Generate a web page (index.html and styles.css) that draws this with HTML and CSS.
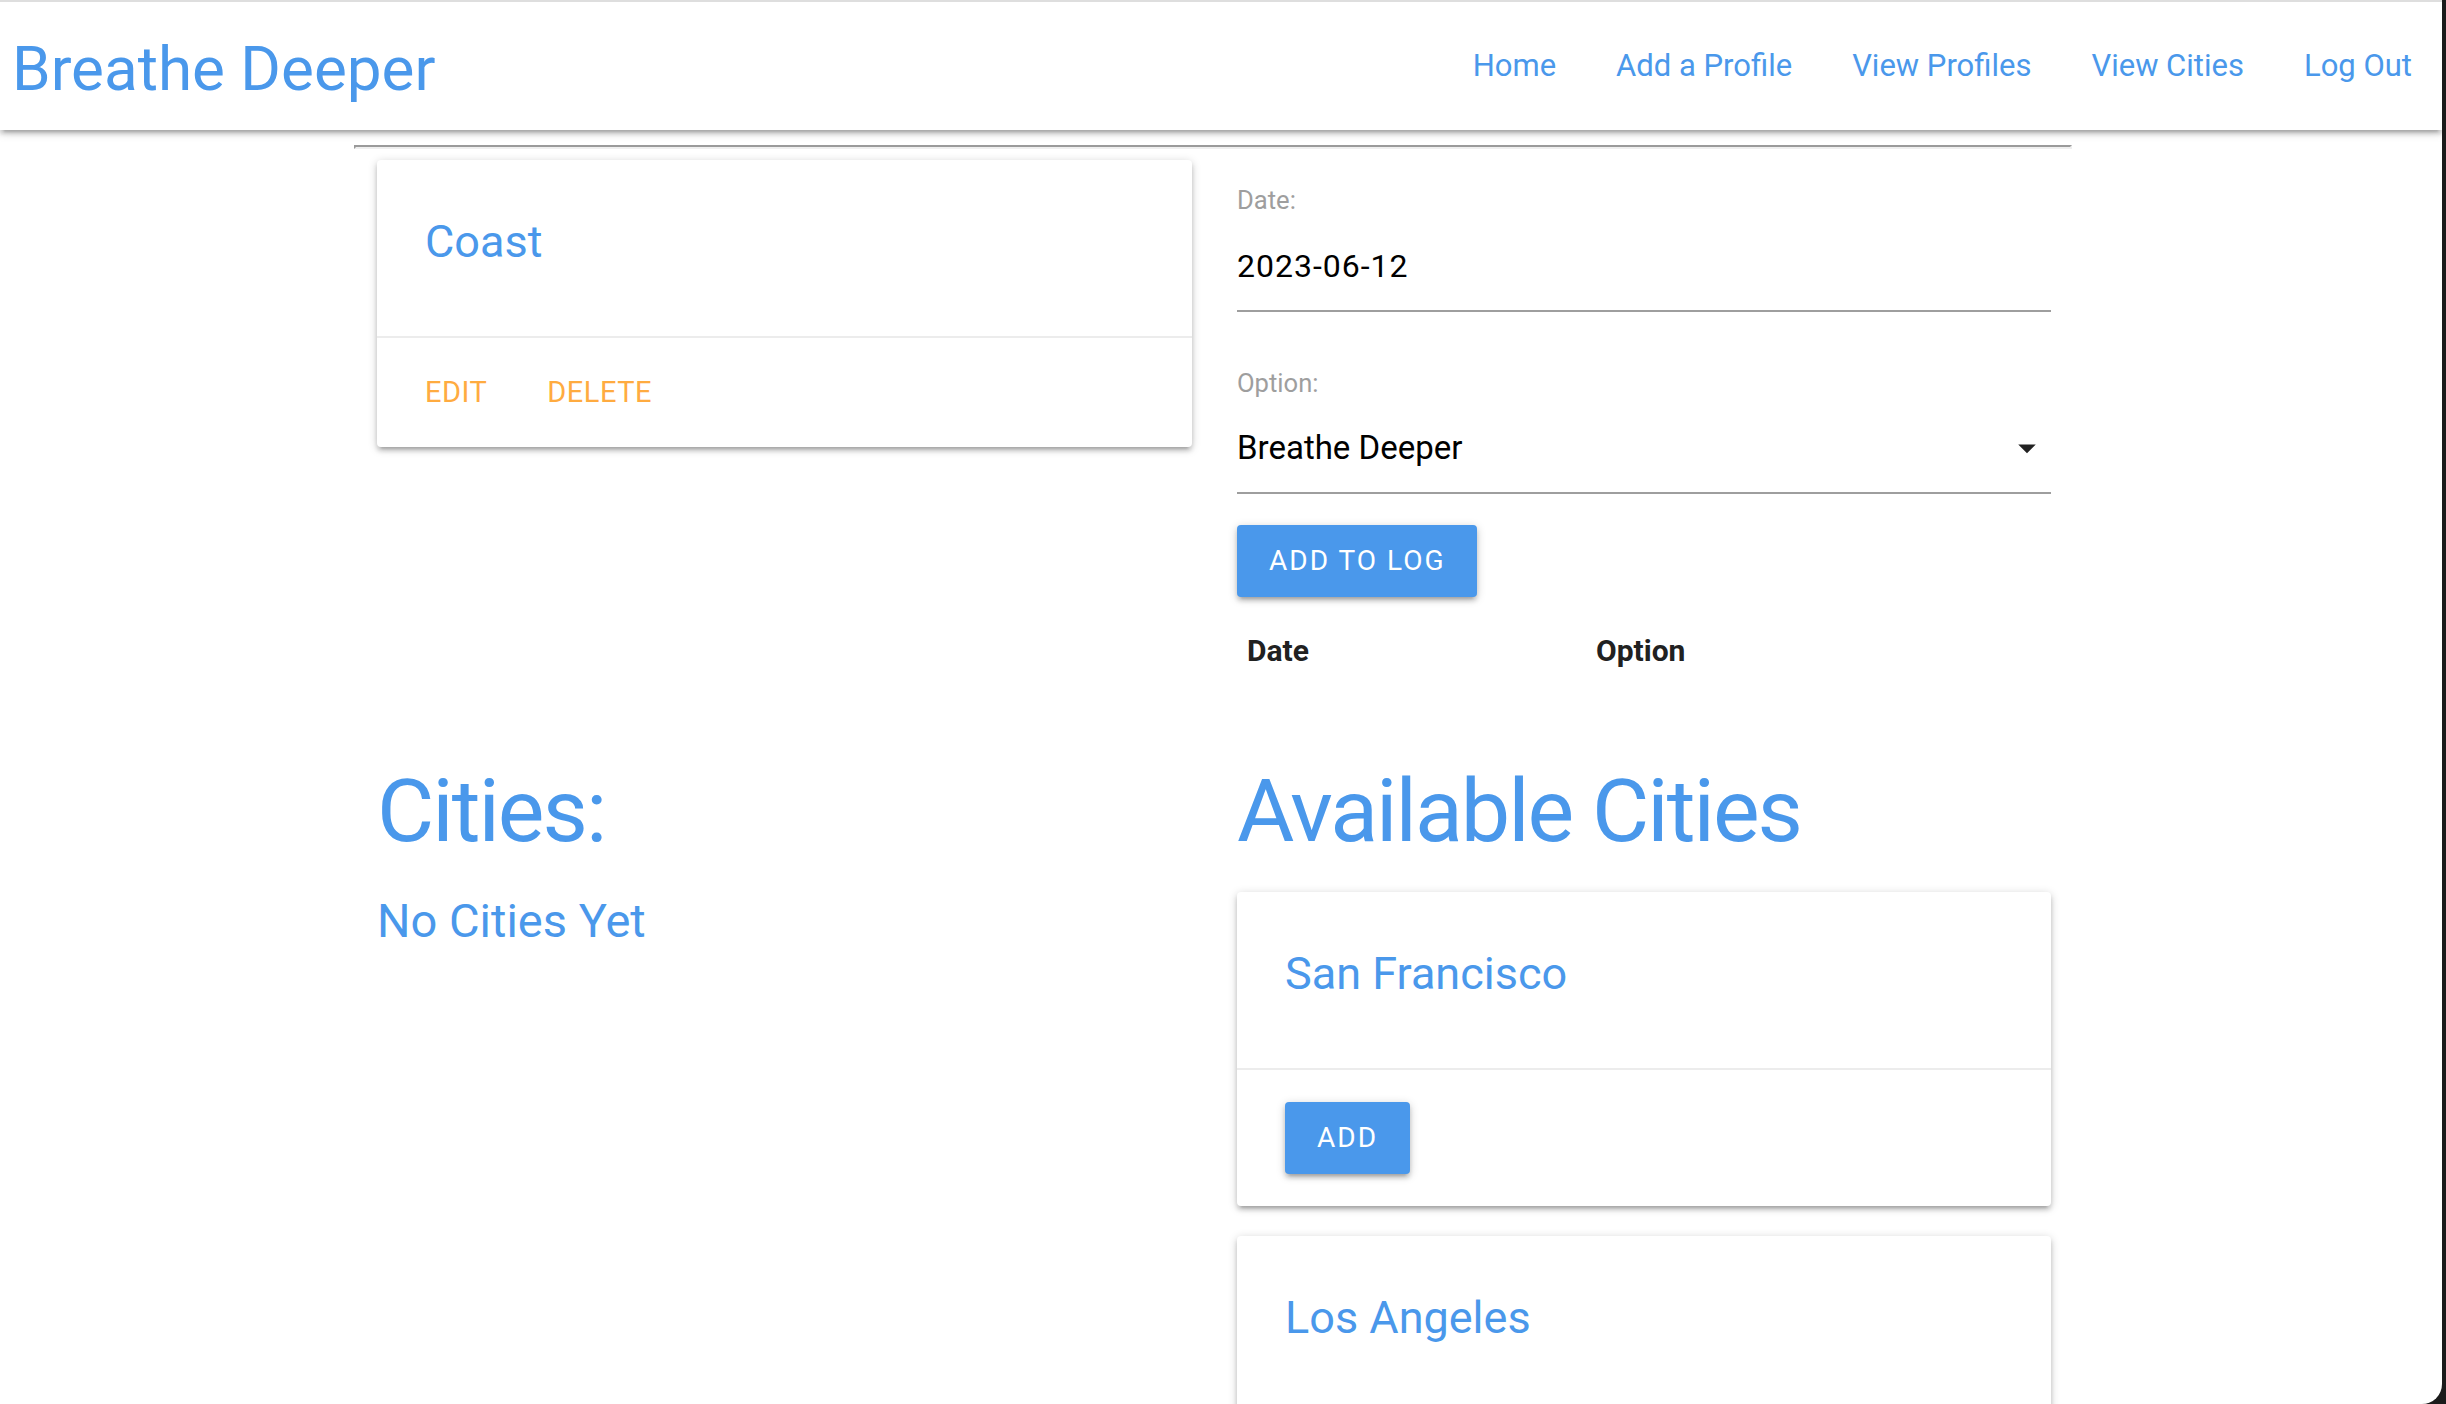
FILE: index.html
```html
<!DOCTYPE html>
<html lang="en">
<head>
<meta charset="utf-8">
<title>Breathe Deeper</title>
<link rel="stylesheet" href="styles.css">
</head>
<body>
<div class="window">
  <nav class="navbar">
    <a class="brand" href="#">Breathe Deeper</a>
    <ul class="nav-links">
      <li><a href="#">Home</a></li>
      <li><a href="#">Add a Profile</a></li>
      <li><a href="#">View Profiles</a></li>
      <li><a href="#">View Cities</a></li>
      <li><a href="#">Log Out</a></li>
    </ul>
  </nav>
  <main class="container">
    <hr class="rule">
    <div class="row top-row">
      <div class="card">
        <div class="card-content"><span class="card-title">Coast</span></div>
        <div class="card-action"><a href="#">EDIT</a><a href="#">DELETE</a></div>
      </div>
      <div class="log">
        <div class="field">
          <div class="label">Date:</div>
          <div class="value date-value">2023-06-12</div>
        </div>
        <div class="field field-option">
          <div class="label">Option:</div>
          <div class="value select-value">
            <span>Breathe Deeper</span>
            <svg class="caret" viewBox="0 0 24 24" width="42" height="42"><path d="M7 10l5 5 5-5z"/></svg>
          </div>
        </div>
        <button class="btn btn-log">ADD TO LOG</button>
        <table class="log-table">
          <thead><tr><th class="col-date">Date</th><th>Option</th></tr></thead>
          <tbody></tbody>
        </table>
      </div>
    </div>
    <div class="row cities-row">
      <div class="my-cities">
        <h2 class="heading">Cities:</h2>
        <h3 class="subheading">No Cities Yet</h3>
      </div>
      <div class="available">
        <h2 class="heading">Available Cities</h2>
        <div class="card city-card">
          <div class="card-content"><span class="card-title">San Francisco</span></div>
          <div class="card-action"><button class="btn">ADD</button></div>
        </div>
        <div class="card city-card city-card-last">
          <div class="card-content"><span class="card-title">Los Angeles</span></div>
        </div>
      </div>
    </div>
  </main>
</div>
</body>
</html>
```

FILE: styles.css
```css
* { box-sizing: border-box; }
html, body { margin: 0; padding: 0; overflow: hidden; }
body {
  background: #1b1b1b;
  font-family: Roboto, "Liberation Sans", Arial, sans-serif;
  color: #212121;
}
.window {
  width: 2442px;
  height: 1404px;
  background: #ffffff;
  border-top: 2px solid #dedede;
  border-bottom-right-radius: 20px;
  overflow: hidden;
}
a { text-decoration: none; }

/* navbar */
.navbar {
  height: 128px;
  display: flex;
  justify-content: space-between;
  align-items: flex-start;
  background: #fff;
  box-shadow: 0 4px 4px 0 rgba(0,0,0,.14), 0 6px 2px -4px rgba(0,0,0,.12), 0 2px 10px 0 rgba(0,0,0,.2);
  position: relative;
  z-index: 2;
}
.brand {
  color: #4a98eb;
  font-size: 62px;
  line-height: 122px;
  padding-top: 6px;
  padding-left: 12px;
}
.nav-links {
  display: flex;
  list-style: none;
  margin: 0;
  padding: 0;
}
.nav-links a {
  display: block;
  padding: 0 30px;
  color: #4a98eb;
  font-size: 31px;
  line-height: 128px;
}

/* container */
.container {
  width: 1718px;
  margin-left: 354px;
}
.rule {
  margin: 15px 0 0 0;
  height: 0;
  border-top: 2px solid #9a9a9a;
  border-left: 2px solid #9a9a9a;
  border-bottom: 2px solid #efefef;
  border-right: 2px solid #efefef;
}
.row {
  display: grid;
  grid-template-columns: 815px 814px;
  column-gap: 45px;
  padding-left: 23px;
  align-items: start;
}
.top-row { margin-top: 11px; }

/* cards */
.card {
  background: #fff;
  border-radius: 4px;
  box-shadow: 0 4px 4px 0 rgba(0,0,0,.14), 0 6px 2px -4px rgba(0,0,0,.12), 0 2px 10px 0 rgba(0,0,0,.2);
}
.card-content {
  padding: 50px 48px 46px;
}
.card-title {
  display: block;
  color: #4a98eb;
  font-size: 45px;
  line-height: 64px;
  margin-bottom: 16px;
}
.card-action {
  border-top: 2px solid rgba(160,160,160,.2);
  padding: 32px 48px;
  display: flex;
  gap: 60px;
}
.card-action a {
  color: #ffab40;
  font-size: 29px;
  line-height: 45px;
  letter-spacing: .5px;
}

/* log form */
.log { padding-top: 25px; }
.label {
  color: #9e9e9e;
  font-size: 25.6px;
  line-height: 30px;
}
.value {
  color: #000;
  line-height: 48px;
  padding-bottom: 20px;
  border-bottom: 2px solid #9e9e9e;
}
.date-value {
  margin-top: 27px;
  font-size: 32px;
  letter-spacing: 1px;
}
.field-option { margin-top: 56px; }
.select-value {
  margin-top: 26px;
  font-size: 33px;
  display: flex;
  justify-content: space-between;
  align-items: center;
}
.caret {
  fill: #222;
  margin-right: 3px;
}
.btn {
  display: inline-block;
  height: 72px;
  padding: 0 32px;
  border: none;
  border-radius: 4px;
  background: #4a98eb;
  color: #fff;
  font-family: Roboto, "Liberation Sans", Arial, sans-serif;
  font-size: 28px;
  line-height: 72px;
  letter-spacing: 2px;
  box-shadow: 0 4px 4px 0 rgba(0,0,0,.14), 0 6px 2px -4px rgba(0,0,0,.12), 0 2px 10px 0 rgba(0,0,0,.2);
}
.btn-log { margin-top: 31px; display: block; }
.log-table {
  margin-top: 1px;
  width: 100%;
  border-collapse: collapse;
  table-layout: fixed;
}
.log-table th {
  text-align: left;
  padding: 30px 10px;
  font-size: 30px;
  line-height: 45px;
  font-weight: 700;
  color: #212121;
}
.log-table .col-date { width: 349px; }

/* cities */
.cities-row { margin-top: 58px; }
.heading {
  margin: 0;
  color: #4a98eb;
  font-size: 88px;
  line-height: 100px;
  font-weight: 400;
  letter-spacing: -2px;
}
.subheading {
  margin: 32px 0 0;
  color: #4a98eb;
  font-size: 47px;
  line-height: 56px;
  font-weight: 400;
}
.available .heading { margin-bottom: 31px; }
.city-card { margin-bottom: 30px; }
.city-card-last .card-content { padding-bottom: 140px; }
```
